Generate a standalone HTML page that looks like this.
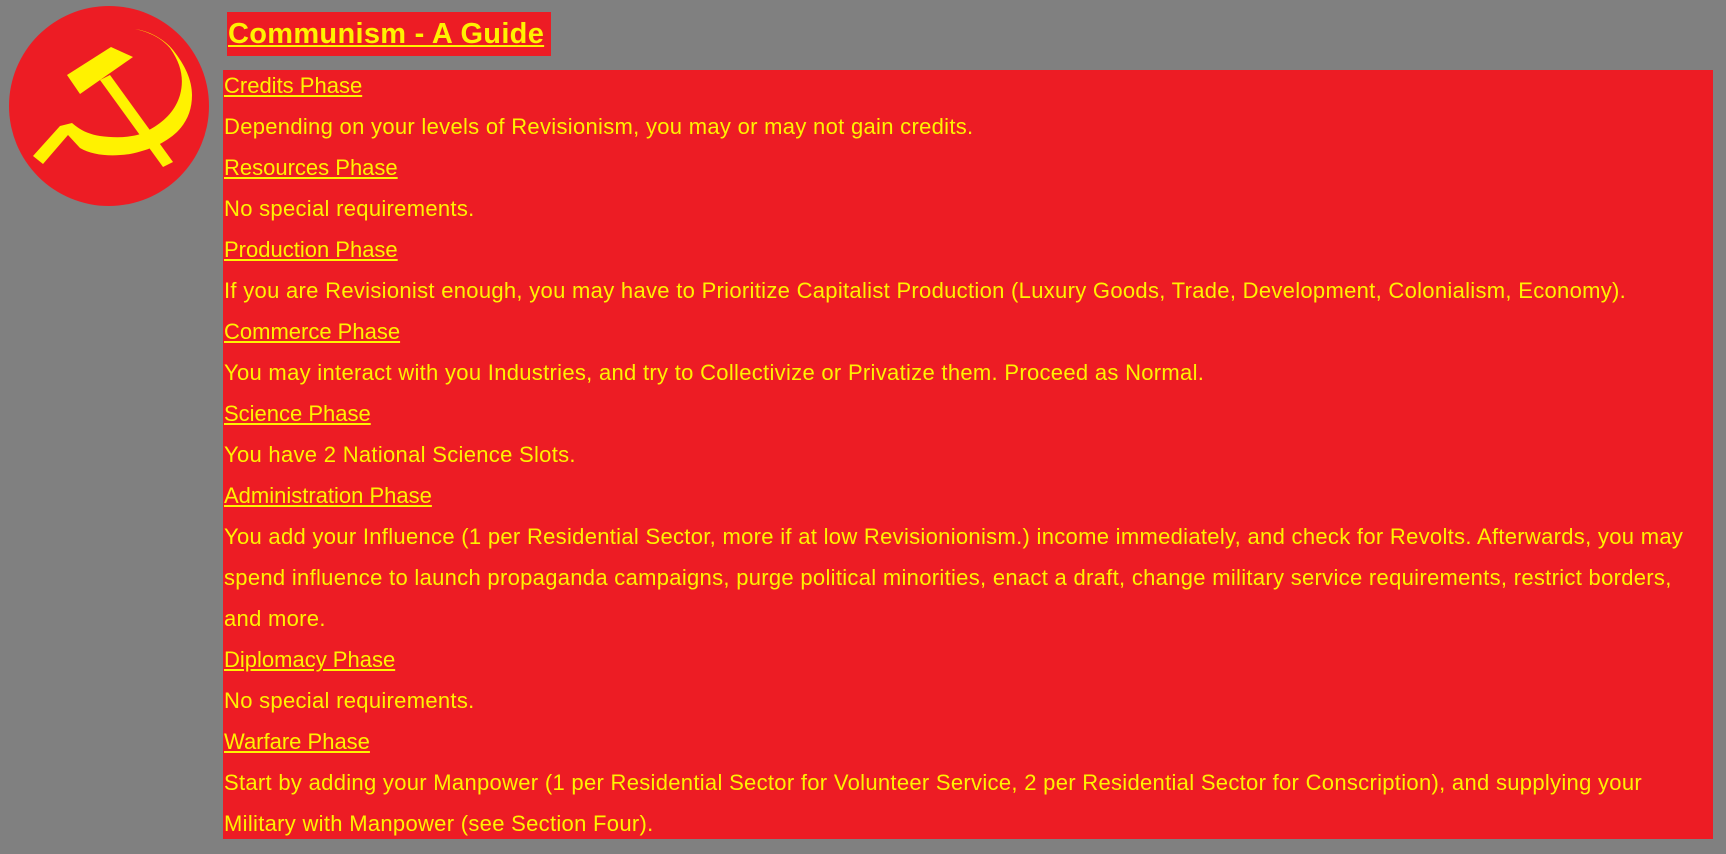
<!DOCTYPE html>
<html><head><style>
body{margin:0;width:1726px;height:854px;background:#808080;position:relative;overflow:hidden;font-family:"Liberation Sans",sans-serif}
.t{position:absolute;left:227px;top:12px;width:324px;height:44px;background:#ED1C24}
.t span{position:absolute;left:1px;top:6px;font-weight:bold;font-size:29px;letter-spacing:0.3px;color:#FFF200;text-decoration:underline;white-space:nowrap}
.b{position:absolute;left:223px;top:70px;width:1490px;height:769px;background:#ED1C24}
.b div{height:41px;line-height:41px;font-size:22px;letter-spacing:0.3px;color:#FFF200;white-space:nowrap;padding-left:1px;position:relative;top:-5px}
.b u{letter-spacing:0}
</style></head><body>
<svg width="220" height="220" style="position:absolute;left:0;top:0">
<circle cx="109" cy="106" r="100" fill="#ED1C24"/>
<polygon points="67,75 111,47 133,57 80,94" fill="#FFF200"/>
<polygon points="100,80 110,75 173,162 163,167" fill="#FFF200"/>
<path d="M135,29 C150,31 165,40 173,50 C185,65 192,80 192,95 C192,110 187,122 177,132 C165,143 150,150 130,154 C110,157 92,155 80,148 L68,135 L43,164 L33,156 L60,126 L72,123 C80,130 88,134 100,136 C115,138 133,138 145,132 C162,124 175,112 180,95 C184,80 182,65 170,48 C163,40 153,33 135,29 Z" fill="#FFF200"/>
</svg>
<div class="t"><span>Communism - A Guide</span></div>
<div class="b">
<div><u>Credits Phase</u></div>
<div>Depending on your levels of Revisionism, you may or may not gain credits.</div>
<div><u>Resources Phase</u></div>
<div>No special requirements.</div>
<div><u>Production Phase</u></div>
<div>If you are Revisionist enough, you may have to Prioritize Capitalist Production (Luxury Goods, Trade, Development, Colonialism, Economy).</div>
<div><u>Commerce Phase</u></div>
<div>You may interact with you Industries, and try to Collectivize or Privatize them. Proceed as Normal.</div>
<div><u>Science Phase</u></div>
<div>You have 2 National Science Slots.</div>
<div><u>Administration Phase</u></div>
<div>You add your Influence (1 per Residential Sector, more if at low Revisionionism.) income immediately, and check for Revolts. Afterwards, you may</div>
<div>spend influence to launch propaganda campaigns, purge political minorities, enact a draft, change military service requirements, restrict borders,</div>
<div>and more.</div>
<div><u>Diplomacy Phase</u></div>
<div>No special requirements.</div>
<div><u>Warfare Phase</u></div>
<div>Start by adding your Manpower (1 per Residential Sector for Volunteer Service, 2 per Residential Sector for Conscription), and supplying your</div>
<div>Military with Manpower (see Section Four).</div>
</div>
</body></html>
